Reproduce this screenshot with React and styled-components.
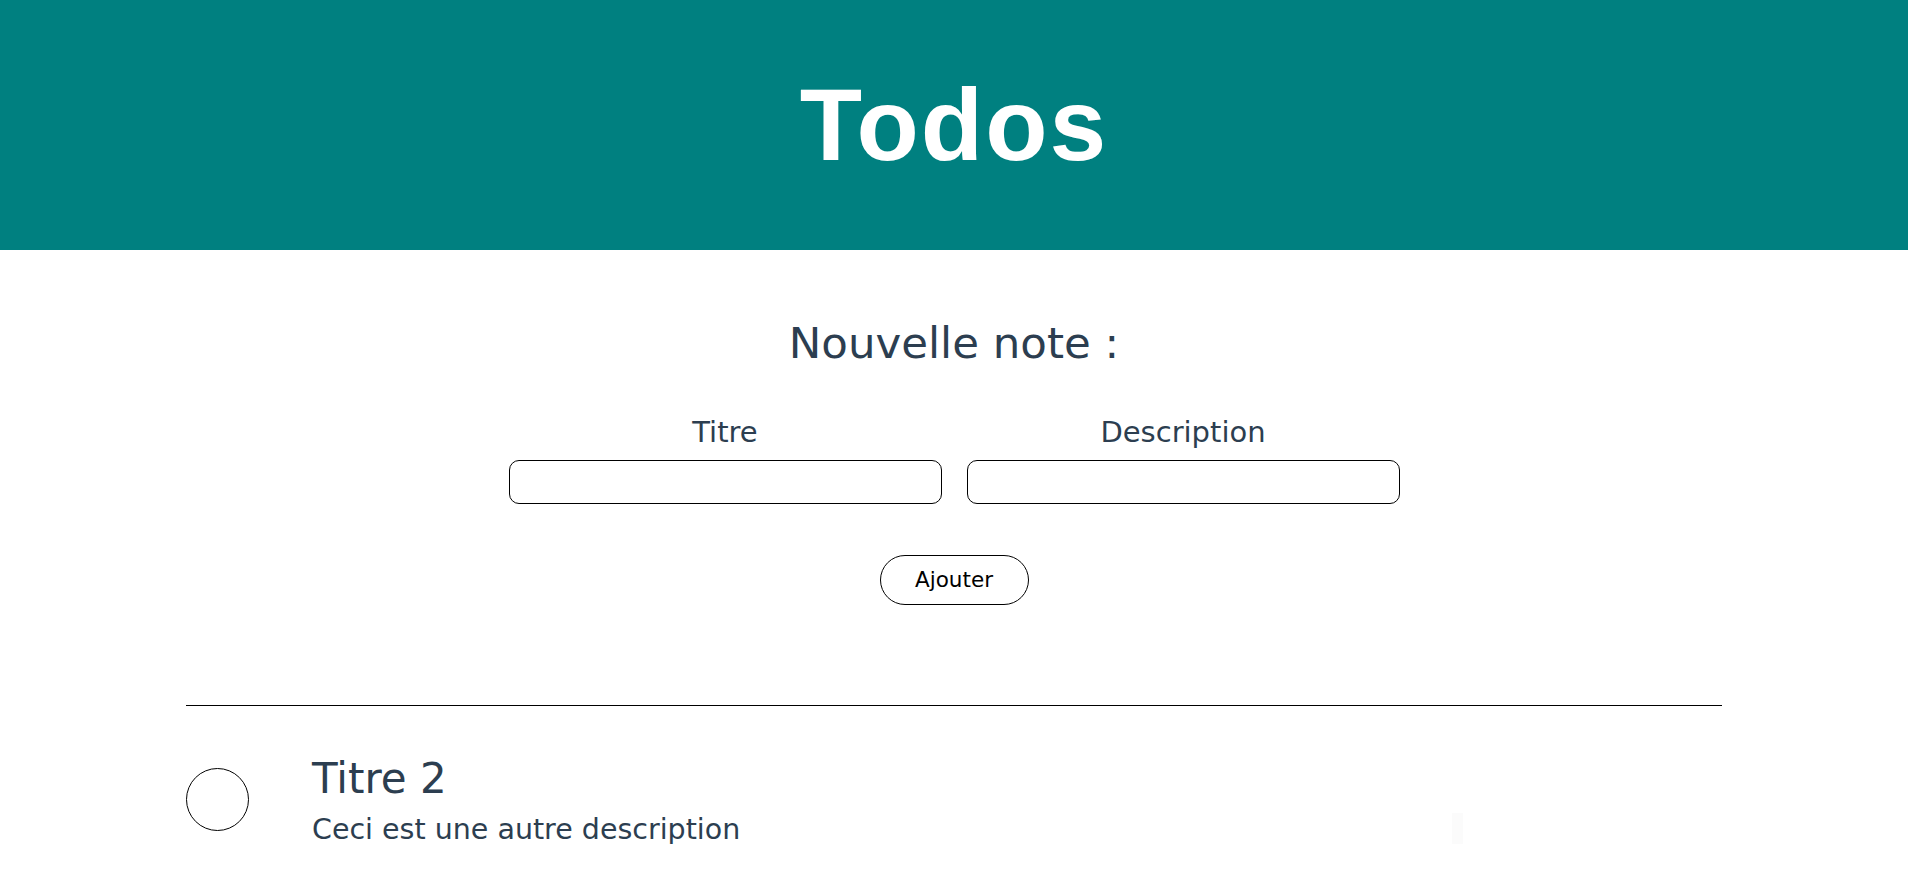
import React, { useState } from 'react';
import styled, { createGlobalStyle } from 'styled-components';

const GlobalStyle = createGlobalStyle`
  body {
    margin: 0;
    background: #ffffff;
    font-family: "DejaVu Sans", "Noto Sans", sans-serif;
    color: #2c3e50;
  }
`;

const Header = styled.header`
  height: 250px;
  background: #008080;
  display: flex;
  align-items: center;
  justify-content: center;
`;

const Title = styled.h1`
  margin: 0;
  font-family: "Liberation Sans", Arial, sans-serif;
  font-weight: 700;
  font-size: 102px;
  letter-spacing: 2px;
  line-height: 1;
  color: #ffffff;
`;

const Main = styled.main`
  padding-top: 72px;
  display: flex;
  flex-direction: column;
  align-items: center;
`;

const SectionTitle = styled.h2`
  margin: 0;
  font-size: 43.5px;
  font-weight: 400;
  line-height: 1;
  color: #2c3e50;
`;

const Fields = styled.div`
  margin-top: 52px;
  display: flex;
  gap: 25px;
  justify-content: center;
`;

const Field = styled.label`
  width: 433px;
  display: flex;
  flex-direction: column;
  align-items: center;
  gap: 13px;
`;

const FieldLabel = styled.span`
  font-size: 29px;
  line-height: 1;
  color: #2c3e50;
`;

const TextInput = styled.input`
  box-sizing: border-box;
  width: 100%;
  height: 44px;
  border: 1px solid #000000;
  border-radius: 10px;
  padding: 0 12px;
  font-family: "DejaVu Sans", sans-serif;
  font-size: 18px;
  outline: none;
`;

const AddButton = styled.button`
  margin-top: 51px;
  width: 149px;
  height: 50px;
  border: 1px solid #000000;
  border-radius: 25px;
  background: #ffffff;
  color: #000000;
  font-family: "DejaVu Sans", sans-serif;
  font-size: 21.5px;
  cursor: pointer;
`;

const Divider = styled.hr`
  align-self: stretch;
  margin: 100px 186px 0;
  border: none;
  border-top: 1px solid #000000;
`;

const TodoRow = styled.div`
  align-self: stretch;
  margin: 52px 186px 0;
  display: grid;
  grid-template-columns: 63px 1203px 11px;
  align-items: start;
`;

const Check = styled.button`
  box-sizing: border-box;
  margin-top: 10px;
  width: 63px;
  height: 63px;
  border-radius: 50%;
  border: 1px solid #000000;
  background: ${(p) => (p.$done ? '#008080' : '#ffffff')};
  padding: 0;
  cursor: pointer;
`;

const TodoText = styled.div`
  margin-left: 63px;
  display: flex;
  flex-direction: column;
  gap: 16px;
`;

const TodoTitle = styled.div`
  font-size: 42px;
  line-height: 1;
  color: #2c3e50;
`;

const TodoDesc = styled.div`
  font-size: 28.5px;
  line-height: 1;
  color: #2c3e50;
`;

const GhostButton = styled.div`
  margin-top: 55px;
  width: 11px;
  height: 31px;
  background: #fbfbfb;
`;

const App = () => {
  const [todos, setTodos] = useState([
    { id: 2, title: 'Titre 2', description: 'Ceci est une autre description', done: false },
  ]);
  const [title, setTitle] = useState('');
  const [description, setDescription] = useState('');

  const addTodo = () => {
    if (!title) return;
    setTodos([...todos, { id: Date.now(), title, description, done: false }]);
    setTitle('');
    setDescription('');
  };

  const toggle = (id) => {
    setTodos(todos.map((t) => (t.id === id ? { ...t, done: !t.done } : t)));
  };

  return (
    <>
      <GlobalStyle />
      <Header>
        <Title>Todos</Title>
      </Header>
      <Main>
        <SectionTitle>Nouvelle note :</SectionTitle>
        <Fields>
          <Field>
            <FieldLabel>Titre</FieldLabel>
            <TextInput value={title} onChange={(e) => setTitle(e.target.value)} />
          </Field>
          <Field>
            <FieldLabel>Description</FieldLabel>
            <TextInput value={description} onChange={(e) => setDescription(e.target.value)} />
          </Field>
        </Fields>
        <AddButton onClick={addTodo}>Ajouter</AddButton>
        <Divider />
        {todos.map((todo) => (
          <TodoRow key={todo.id}>
            <Check $done={todo.done} onClick={() => toggle(todo.id)} />
            <TodoText>
              <TodoTitle>{todo.title}</TodoTitle>
              <TodoDesc>{todo.description}</TodoDesc>
            </TodoText>
            <GhostButton />
          </TodoRow>
        ))}
      </Main>
    </>
  );
};

export default App;
